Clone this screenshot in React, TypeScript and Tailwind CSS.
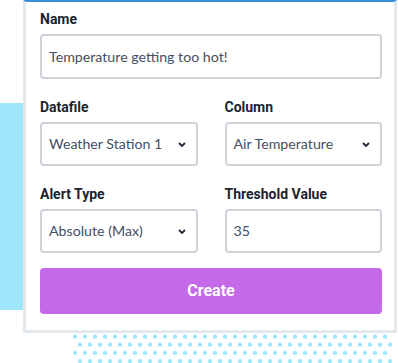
import React from 'react';

const labelCls = "block text-[14px] leading-[20px] font-bold text-[#1c2431] mb-[5px] font-['Roboto',sans-serif]";
const fieldCls =
  "flex items-center w-full border-2 border-[#cdd3d8] rounded-[4px] bg-white pl-[7px] pr-[10px] text-[14.2px] text-[#434f63] font-['Lato',sans-serif]";

function Chevron() {
  return (
    <svg width="8" height="5" viewBox="0 0 8 5" className="ml-auto shrink-0">
      <polyline points="1,1 4,4 7,1" fill="none" stroke="#1f2937" strokeWidth="1.8" />
    </svg>
  );
}

function Select({ label, value }: { label: string; value: string }) {
  return (
    <div>
      <label className={labelCls}>{label}</label>
      <div className={`${fieldCls} h-[44px]`}>
        <span>{value}</span>
        <Chevron />
      </div>
    </div>
  );
}

function Field({ label, value, h = 'h-[44px]' }: { label: string; value: string; h?: string }) {
  return (
    <div>
      <label className={labelCls}>{label}</label>
      <div className={`${fieldCls} ${h}`}>{value}</div>
    </div>
  );
}

export default function App() {
  return (
    <div className="relative w-[398px] h-[363px] overflow-hidden bg-white">
      {/* fundo decorativo */}
      <div className="absolute left-0 top-[103px] w-[40px] h-[207px] bg-[#9fe6fb]" />
      <svg className="absolute left-[70px] top-[332px]" width="328" height="31">
        <defs>
          <pattern id="dots" x="0" y="0" width="10" height="16.4" patternUnits="userSpaceOnUse">
            <circle cx="5" cy="4.5" r="2.1" fill="#9ae6fd" />
            <circle cx="10" cy="12.7" r="2.1" fill="#9ae6fd" />
            <circle cx="0" cy="12.7" r="2.1" fill="#9ae6fd" />
          </pattern>
        </defs>
        <rect x="3" width="320" height="31" fill="url(#dots)" />
      </svg>

      {/* Card */}
      <div className="relative ml-[23px] w-[374px] bg-white border-[3px] border-[#e4e9ee] border-t-2 border-t-[#3a8fd8] pl-[14px] pr-[12px] pt-[7px] pb-[16px]">
        <Field label="Name" value="Temperature getting too hot!" h="h-[45px]" />

        <div className="grid grid-cols-2 gap-x-[27px] gap-y-[18px] mt-[18px]">
          <Select label="Datafile" value="Weather Station 1" />
          <Select label="Column" value="Air Temperature" />
          <Select label="Alert Type" value="Absolute (Max)" />
          <Field label="Threshold Value" value="35" />
        </div>

        <button className="mt-[15px] w-full h-[46px] rounded-[4px] bg-[#c46ae8] text-white text-[16px] font-bold font-['Roboto',sans-serif]">
          Create
        </button>
      </div>
    </div>
  );
}
